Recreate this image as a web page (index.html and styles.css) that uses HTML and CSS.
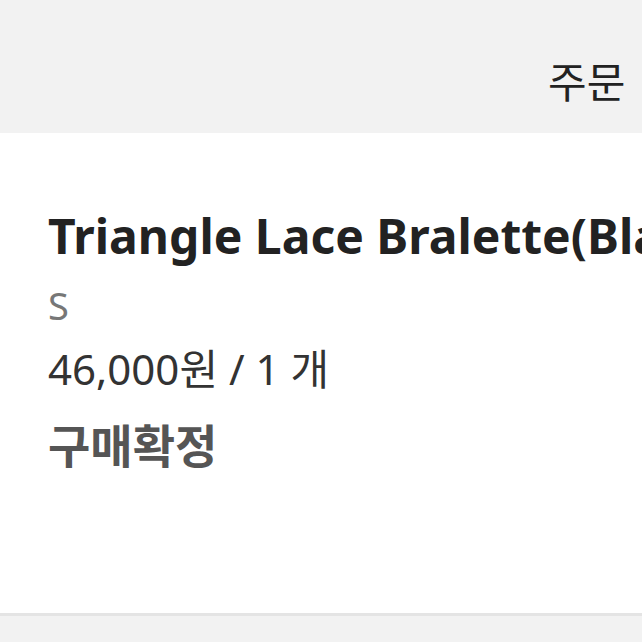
FILE: index.html
```html
<!DOCTYPE html>
<html lang="ko">
<head>
    <meta charset="UTF-8">
    <title>주문 상세</title>
    <link rel="stylesheet" href="styles.css">
</head>
<body>
<div class="top-bar">
    <span class="top-title">주문 상세</span>
</div>
<div class="order-item">
    <div class="item-name">Triangle Lace Bralette(Black)</div>
    <div class="item-option">S</div>
    <div class="item-price">46,000원 / 1 개</div>
    <div class="item-status">구매확정</div>
</div>
</body>
</html>
```
FILE: styles.css
```css
*{
    margin: 0;
    padding: 0;
}
body{
    background-color: #f2f2f2;
    font-family: "Noto Sans", "Noto Sans CJK KR", sans-serif;
    overflow: hidden;
}
.top-bar{
    height: 133px;
    padding-left: 548px;
    white-space: nowrap;
    overflow: hidden;
    box-sizing: border-box;
    padding-top: 50px;
}
.top-title{
    font-family: "Noto Sans CJK KR", sans-serif;
    font-size: 42px;
    line-height: 60px;
    word-spacing: 6px;
    color: #222;
}
.order-item{
    background-color: #fff;
    height: 483px;
    box-sizing: border-box;
    border-bottom: 3px solid #e4e4e4;
    padding: 66px 0 0 48px;
    white-space: nowrap;
    overflow: hidden;
}
.item-name{
    font-weight: bold;
    font-size: 48px;
    line-height: 74px;
    color: #222;
}
.item-option{
    font-size: 38px;
    line-height: 64px;
    color: #777;
}
.item-price{
    font-size: 42px;
    line-height: 64px;
    color: #333;
}
.item-status{
    margin-top: 10px;
    font-family: "Noto Sans CJK KR", sans-serif;
    font-weight: bold;
    font-size: 46px;
    line-height: 64px;
    color: #555;
}
```
